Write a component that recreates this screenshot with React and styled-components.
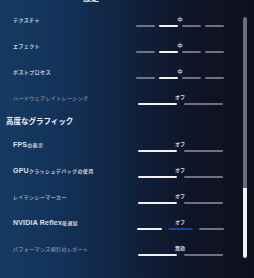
import React from "react";
import styled, { createGlobalStyle } from "styled-components";

const rows = [
  { label: "テクスチャ", value: "中", bars: ["off", "on", "off", "off"] },
  { label: "エフェクト", value: "中", bars: ["off", "on", "off", "off"] },
  { label: "ポストプロセス", value: "中", bars: ["off", "on", "off", "off"] },
  { label: "ハードウェアレイトレーシング", value: "オフ", bars: ["on", "off"], dim: true },
];

const advanced = [
  { latin: "FPS", label: "の表示", value: "オフ", bars: ["on", "off"] },
  { latin: "GPU", label: "クラッシュデバッグの使用", value: "オフ", bars: ["on", "off"] },
  { label: "レイテンシーマーカー", value: "オフ", bars: ["on", "off"], mid: true },
  { latin: "NVIDIA Reflex", label: "低遅延", value: "オフ", bars: ["on", "blue", "off"] },
  { label: "パフォーマンス統計のレポート", value: "無効", bars: ["on", "off"], dim: true },
];

const widths = { 2: [39, 7], 3: [25, 6], 4: [19, 4] };

const SettingRow = ({ row }) => {
  const [w, gap] = widths[row.bars.length];
  return (
    <SRow>
      <SLabel $dim={row.dim} $mid={row.mid}>
        {row.latin && <SLatin>{row.latin}</SLatin>}
        {row.label}
      </SLabel>
      <SControl>
        <SValue>{row.value}</SValue>
        <SBars $gap={gap}>
          {row.bars.map((b, i) => (
            <SSegment key={i} $w={w} $state={b} />
          ))}
        </SBars>
      </SControl>
    </SRow>
  );
};

const App = () => {
  return (
    <>
      <GlobalStyle />
      <SPage>
        <SContent>
          <STitle>設定</STitle>
          {rows.map((r) => (
            <SettingRow key={r.label} row={r} />
          ))}
          <SHeading>高度なグラフィック</SHeading>
          {advanced.map((r) => (
            <SettingRow key={r.label} row={r} />
          ))}
        </SContent>
        <SScroll>
          <STrack />
          <SThumb />
        </SScroll>
      </SPage>
    </>
  );
};

export default App;

const GlobalStyle = createGlobalStyle`
  html, body {
    margin: 0;
    padding: 0;
    width: 254px;
    height: 278px;
    overflow: hidden;
  }
  body {
    font-family: "Noto Sans CJK JP", "Noto Sans", sans-serif;
  }
`;

const SPage = styled.div`
  width: 254px;
  height: 278px;
  display: flex;
  overflow: hidden;
  background: linear-gradient(
    to right,
    #153b63 0%,
    #123158 25%,
    #10223f 50%,
    #0f1629 72%,
    #0e0f1d 100%
  );
`;

const SContent = styled.div`
  flex: 1;
  padding-left: 13px;
`;

const STitle = styled.div`
  margin: -7px 0 11px 70px;
  height: 10px;
  line-height: 10px;
  font-size: 8px;
  font-weight: 700;
  color: #e6e8ee;
`;

const SRow = styled.div`
  display: flex;
  align-items: flex-start;
  height: 26px;
`;

const SLabel = styled.div`
  width: 122px;
  line-height: 12px;
  font-size: 5px;
  letter-spacing: 0.4px;
  font-weight: 700;
  white-space: nowrap;
  color: ${(p) => (p.$dim ? "#7c8596" : p.$mid ? "#a9b0bd" : "#c8ceda")};
`;

const SLatin = styled.span`
  font-family: "Liberation Sans", Arial, sans-serif;
  font-size: 7px;
  letter-spacing: 0.2px;
  font-weight: 700;
  color: #dfe3ea;
`;

const SControl = styled.div`
  width: 90px;
  display: flex;
  flex-direction: column;
  align-items: center;
`;

const SValue = styled.div`
  height: 10px;
  line-height: 10px;
  font-size: 5px;
  font-weight: 700;
  color: #d5d9e0;
`;

const SBars = styled.div`
  display: flex;
  gap: ${(p) => p.$gap}px;
  margin-top: 1px;
`;

const SSegment = styled.div`
  width: ${(p) => p.$w}px;
  height: 2px;
  border-radius: 1px;
  background: ${(p) =>
    p.$state === "on" ? "#f2f2f4" : p.$state === "blue" ? "#1f3ea0" : "#70737f"};
`;

const SHeading = styled.div`
  margin: -3px 0 12px -7px;
  height: 12px;
  line-height: 12px;
  font-size: 7.5px;
  font-weight: 700;
  color: #f4f5f8;
  white-space: nowrap;
`;

const SScroll = styled.div`
  width: 4px;
  margin: 17px 7px 0 0;
  display: flex;
  flex-direction: column;
`;

const STrack = styled.div`
  height: 171px;
  background: #6b6d7e;
  border-radius: 2px 2px 0 0;
`;

const SThumb = styled.div`
  height: 70px;
  background: #f1f1f3;
  border-radius: 0 0 2px 2px;
`;
